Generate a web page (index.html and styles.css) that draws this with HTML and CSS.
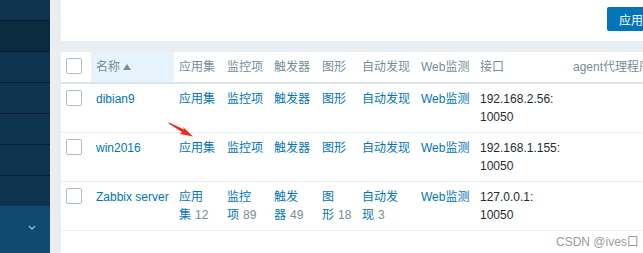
FILE: index.html
```html
<!DOCTYPE html>
<html lang="zh-CN">
<head>
  <meta charset="UTF-8">
  <meta name="viewport" content="width=device-width, initial-scale=1.0">
  <title>主机</title>
  <link rel="stylesheet" href="styles.css">
</head>
<body>

  <aside class="sidebar">
    <div class="nav-item nav-top"></div>
    <div class="nav-item nav-active"></div>
    <div class="nav-item"></div>
    <div class="nav-item"></div>
    <div class="nav-item"></div>
    <div class="nav-item"></div>
    <div class="nav-item nav-last"></div>
    <div class="nav-footer">
      <svg class="chevron" width="8" height="5" viewBox="0 0 8 5">
        <path d="M1 1 L4 4 L7 1" fill="none" stroke="#9fb8c9" stroke-width="1.3"/>
      </svg>
    </div>
  </aside>

  <main class="main">
    <div class="toolbar">
      <button class="btn">应用</button>
    </div>

    <div class="list-panel">
      <table class="list-table">
        <colgroup>
          <col style="width:30px">
          <col style="width:83px">
          <col style="width:48px">
          <col style="width:47px">
          <col style="width:48px">
          <col style="width:40px">
          <col style="width:59px">
          <col style="width:59px">
          <col style="width:93px">
          <col style="width:120px">
        </colgroup>
        <thead>
          <tr>
            <th><span class="checkbox"></span></th>
            <th class="sorted">名称<span class="sort-up"></span></th>
            <th>应用集</th>
            <th>监控项</th>
            <th>触发器</th>
            <th>图形</th>
            <th>自动发现</th>
            <th>Web监测</th>
            <th>接口</th>
            <th>agent代理程序</th>
          </tr>
        </thead>
        <tbody>
          <tr>
            <td><span class="checkbox"></span></td>
            <td><a href="#">dibian9</a></td>
            <td><a href="#">应用集</a></td>
            <td><a href="#">监控项</a></td>
            <td><a href="#">触发器</a></td>
            <td><a href="#">图形</a></td>
            <td><a href="#">自动发现</a></td>
            <td><a href="#">Web监测</a></td>
            <td>192.168.2.56: 10050</td>
            <td></td>
          </tr>
          <tr>
            <td><span class="checkbox"></span></td>
            <td><a href="#">win2016</a></td>
            <td><a href="#">应用集</a></td>
            <td><a href="#">监控项</a></td>
            <td><a href="#">触发器</a></td>
            <td><a href="#">图形</a></td>
            <td><a href="#">自动发现</a></td>
            <td><a href="#">Web监测</a></td>
            <td>192.168.1.155: 10050</td>
            <td></td>
          </tr>
          <tr>
            <td><span class="checkbox"></span></td>
            <td><a href="#">Zabbix server</a></td>
            <td><a href="#">应用集</a>&#8288;<span class="num">12</span></td>
            <td><a href="#">监控项</a>&#8288;<span class="num">89</span></td>
            <td><a href="#">触发器</a>&#8288;<span class="num">49</span></td>
            <td><a href="#">图形</a>&#8288;<span class="num">18</span></td>
            <td><a href="#">自动发现</a>&#8288;<span class="num">3</span></td>
            <td><a href="#">Web监测</a></td>
            <td>127.0.0.1: 10050</td>
            <td></td>
          </tr>
        </tbody>
      </table>
    </div>
  </main>

  <!-- red annotation arrow drawn over the table -->
  <svg class="annotation" width="30" height="20" viewBox="0 0 30 20">
    <path d="M1 1.5 L16 8.6 L15 6 L25 15.5 L11.5 12.8 L14.4 11.2 L0.6 2.6 Z" fill="#f2271d"/>
  </svg>

  <div class="watermark">CSDN @ives口</div>

</body>
</html>
```

FILE: styles.css
```css
body {
  margin: 0;
  width: 643px;
  height: 253px;
  overflow: hidden;
  display: flex;
  background-color: #ebeef0;
  font-family: "Liberation Sans", Arial, "Noto Sans CJK SC", sans-serif;
  font-size: 12px;
  color: #1f2c33;
  position: relative;
}

/* left navigation */
.sidebar {
  width: 50px;
  flex-shrink: 0;
  display: flex;
  flex-direction: column;
  background-color: #0f3450;
}

.nav-item {
  height: 30px;
  border-bottom: 1px solid #0a1d2c;
}

.nav-top {
  height: 20px;
}

.nav-active {
  background-color: #0b2b41;
}

.nav-last {
  border-bottom: none;
}

.nav-footer {
  flex: 1;
  background-color: #0d4970;
  display: flex;
  justify-content: flex-end;
  padding: 19px 14px 0 0;
}

.chevron {
  display: block;
}

/* content */
.main {
  flex: 1;
  min-width: 0;
  padding-left: 11px;
  display: flex;
  flex-direction: column;
}

.toolbar {
  height: 41px;
  background-color: #fff;
  display: flex;
  justify-content: flex-end;
  align-items: flex-start;
  padding-top: 7px;
  box-sizing: border-box;
}

.btn {
  height: 24px;
  margin-right: -12px;
  padding: 0 12px;
  border: none;
  border-radius: 2px;
  background-color: #0275b8;
  color: #fff;
  font-family: inherit;
  font-size: 12px;
}

.list-panel {
  margin-top: 11px;
  flex: 1;
  background-color: #fff;
  overflow: hidden;
}

.list-table {
  width: 627px;
  table-layout: fixed;
  border-collapse: collapse;
}

.list-table th,
.list-table td {
  padding: 6px 5px;
  line-height: 18px;
  text-align: left;
  vertical-align: top;
  white-space: normal;
}

.list-table th {
  font-weight: normal;
  color: #768d99;
  border-bottom: 2px solid #dfe4e7;
  white-space: nowrap;
  overflow: hidden;
}

.list-table td {
  border-bottom: 1px solid #ebeef0;
}

.list-table th.sorted {
  background-color: #e6f2fc;
}

.sort-up {
  display: inline-block;
  margin-left: 3px;
  width: 0;
  height: 0;
  border-left: 4px solid transparent;
  border-right: 4px solid transparent;
  border-bottom: 6px solid #768d99;
  vertical-align: 1px;
}

.checkbox {
  display: block;
  width: 14px;
  height: 14px;
  border: 1px solid #acbbc4;
  border-radius: 2px;
  background-color: #fff;
}

.list-table a {
  color: #0275b8;
  text-decoration: none;
}

.num {
  color: #768d99;
  padding-left: 4px;
}

.annotation {
  position: absolute;
  left: 168px;
  top: 121px;
}

.watermark {
  position: absolute;
  left: 556px;
  top: 232px;
  color: #9b9b9b;
  font-size: 12px;
}
```
